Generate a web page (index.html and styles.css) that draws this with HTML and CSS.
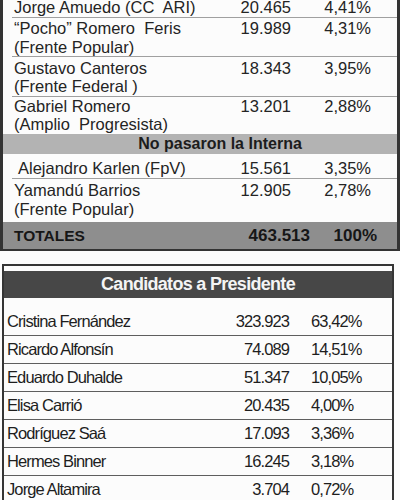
FILE: index.html
```html
<!DOCTYPE html>
<html lang="es">
<head>
  <meta charset="UTF-8">
  <meta name="viewport" content="width=device-width, initial-scale=1.0">
  <title>Resultados de las internas</title>
  <link rel="stylesheet" href="styles.css">
</head>
<body>
  <div class="results">
    <div class="row first">
      <span class="name">Jorge Amuedo (CC&nbsp; ARI)</span>
      <span class="num">20.465</span>
      <span class="pct">4,41%</span>
    </div>
    <div class="row">
      <span class="name">“Pocho” Romero&nbsp; Feris<br>(Frente Popular)</span>
      <span class="num">19.989</span>
      <span class="pct">4,31%</span>
    </div>
    <div class="row">
      <span class="name">Gustavo Canteros<br>(Frente Federal )</span>
      <span class="num">18.343</span>
      <span class="pct">3,95%</span>
    </div>
    <div class="row before-band">
      <span class="name">Gabriel Romero<br>(Amplio&nbsp; Progresista)</span>
      <span class="num">13.201</span>
      <span class="pct">2,88%</span>
    </div>

    <div class="band">No pasaron la Interna</div>

    <div class="row single">
      <span class="name indent">Alejandro Karlen (FpV)</span>
      <span class="num">15.561</span>
      <span class="pct">3,35%</span>
    </div>
    <div class="row before-totals">
      <span class="name">Yamandú Barrios<br>(Frente Popular)</span>
      <span class="num">12.905</span>
      <span class="pct">2,78%</span>
    </div>

    <div class="totals">
      <span class="label">TOTALES</span>
      <span class="num">463.513</span>
      <span class="pct">100%</span>
    </div>
  </div>

  <div class="president">
    <div class="president-head">Candidatos a Presidente</div>
    <div class="p-row first">
      <span>Cristina Fernández</span><span class="num">323.923</span><span class="pct">63,42%</span>
    </div>
    <div class="p-row">
      <span>Ricardo Alfonsín</span><span class="num">74.089</span><span class="pct">14,51%</span>
    </div>
    <div class="p-row">
      <span>Eduardo Duhalde</span><span class="num">51.347</span><span class="pct">10,05%</span>
    </div>
    <div class="p-row">
      <span>Elisa Carrió</span><span class="num">20.435</span><span class="pct">4,00%</span>
    </div>
    <div class="p-row">
      <span>Rodríguez Saá</span><span class="num">17.093</span><span class="pct">3,36%</span>
    </div>
    <div class="p-row">
      <span>Hermes Binner</span><span class="num">16.245</span><span class="pct">3,18%</span>
    </div>
    <div class="p-row">
      <span>Jorge Altamira</span><span class="num">3.704</span><span class="pct">0,72%</span>
    </div>
  </div>
</body>
</html>
```

FILE: styles.css
```css
/* Base */
* {
  margin: 0;
  padding: 0;
  box-sizing: border-box;
}

body {
  background: #fcfcfc;
  color: #242424;
  font-family: 'Liberation Sans', Arial, sans-serif;
  width: 400px;
  height: 500px;
  overflow: hidden;
}

/* Internal results table (cropped at the top) */
.results {
  margin-top: -6px;
  border-left: 3px solid #333;
  border-right: 3px solid #333;
  border-bottom: 2px solid #333;
}

.row {
  display: grid;
  grid-template-columns: 1fr 80px 80px;
  margin-left: 9px;
  padding-top: 1.5px;
  border-bottom: 1px solid #a0a0a0;
  font-size: 16.5px;
  line-height: 18.5px;
}

.row.first {
  padding-top: 4px;
}

.row.before-band {
  border-bottom: none;
  padding-top: 0;
}

.row.single {
  padding: 3px 0 1px;
}

.row.before-totals {
  border-bottom: none;
  padding: 2px 0 4px;
}

.row .name {
  padding-left: 2px;
}

.row .name.indent {
  padding-left: 6px;
}

.row .num,
.row .pct {
  text-align: right;
  padding-right: 26px;
}

.band {
  background: #b3b3b3;
  color: #1c1c1c;
  font-weight: bold;
  font-size: 16px;
  line-height: 20px;
  text-align: center;
  padding-left: 40px;
  margin-bottom: 2px;
}

.totals {
  display: grid;
  grid-template-columns: 1fr 80px 80px;
  align-items: center;
  height: 27px;
  background: #8e8e8e;
  color: #161616;
  font-weight: bold;
  font-size: 17px;
}

.totals .label {
  padding-left: 11px;
  font-size: 15.5px;
}

.totals .num {
  text-align: right;
  padding-right: 7px;
}

.totals .pct {
  text-align: right;
  padding-right: 20px;
}

/* Presidential results, condensed type */
.president {
  margin: 13px 0 0 2px;
  width: 392px;
  border: 2px solid #353535;
  border-bottom: none;
  padding-top: 5px;
  color: #1e1e1e;
}

.president-head {
  background: #474747;
  color: #f4f4f4;
  font-weight: bold;
  font-size: 18px;
  letter-spacing: -0.7px;
  line-height: 27px;
  text-align: center;
}

.p-row {
  display: grid;
  grid-template-columns: 1fr 72px 103px;
  font-size: 16.5px;
  letter-spacing: -0.9px;
  line-height: 27px;
  border-bottom: 1px solid #5e5e5e;
}

.p-row.first {
  padding-top: 10px;
}

.p-row span:first-child {
  padding-left: 3px;
}

.p-row .num {
  text-align: right;
}

.p-row .pct {
  padding-left: 22px;
}
```
